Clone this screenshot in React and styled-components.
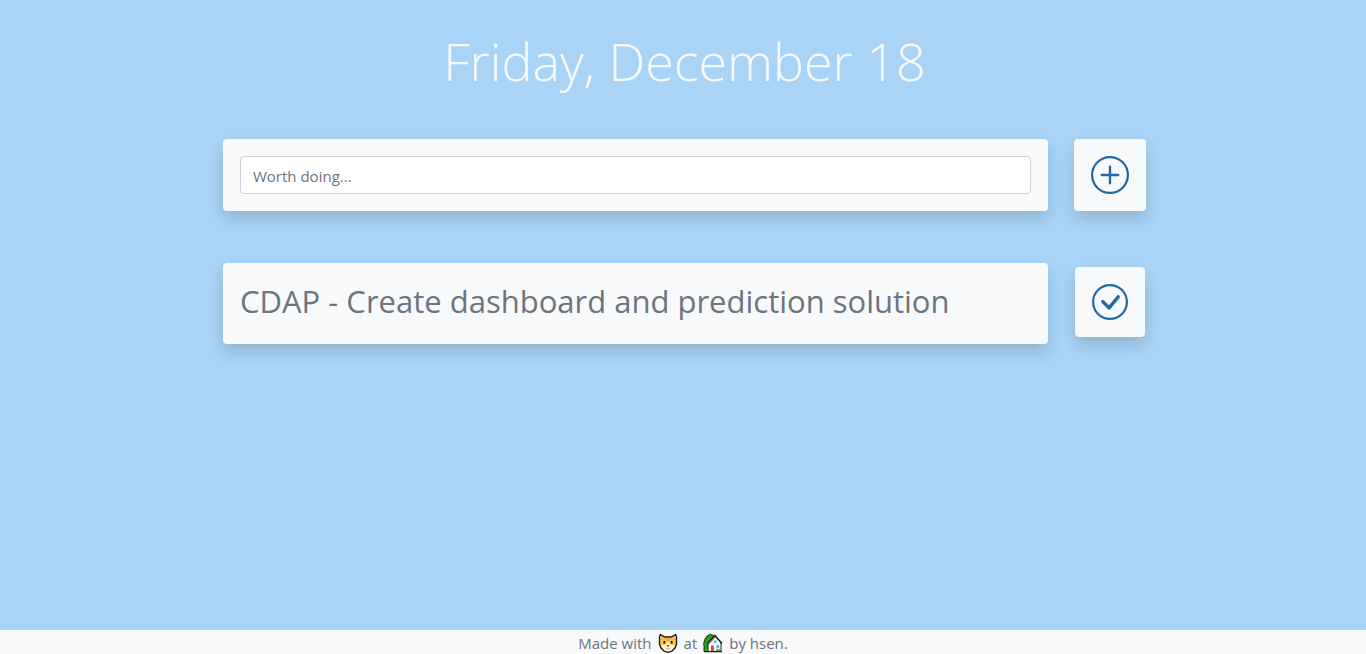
import React, { useState } from 'react';
import styled, { createGlobalStyle } from 'styled-components';

const GlobalStyle = createGlobalStyle`
  *, *::before, *::after { box-sizing: border-box; }
  body {
    margin: 0;
    background: #a9d4f6;
    color: #6c757d;
    font-family: "Segoe UI", "Open Sans", "Noto Sans", sans-serif;
    font-size: 15px;
    line-height: 24px;
  }
`;

const Page = styled.div`
  display: flex;
  flex-direction: column;
  min-height: 100vh;
`;

const Main = styled.main`
  flex: 1;
  width: 100%;
  max-width: 926px;
  margin: 0 auto;
  padding: 27px 0 48px 3px;
`;

const Heading = styled.h1`
  margin: 0 0 45px;
  color: #f8f9fa;
  font-family: "Segoe UI", "Open Sans", "Noto Sans", sans-serif;
  font-size: 52px;
  font-weight: 300;
  line-height: 67px;
  text-align: center;
`;

const Row = styled.div`
  display: grid;
  grid-template-columns: minmax(0, 1fr) 72px;
  column-gap: 26px;
  align-items: center;
`;

const EntryForm = styled(Row)`
  margin-bottom: 52px;
`;

const Card = styled.div`
  padding: ${(p) => p.$pad || '17px'};
  background: #f8f9fa;
  border-radius: 4px;
  box-shadow: 0 8px 16px rgba(0, 0, 0, 0.15);
`;

const TextInput = styled.input`
  display: block;
  width: 100%;
  height: 38px;
  padding: 8px 12px 6px;
  border: 1px solid #ced4da;
  border-radius: 4px;
  background: #fff;
  color: #495057;
  font: inherit;
  &::placeholder { color: #6c757d; opacity: 1; }
`;

const TaskTitle = styled.h2`
  margin: 0;
  font-size: 31px;
  font-weight: 400;
  line-height: 38px;
`;

const IconButton = styled.button`
  display: flex;
  align-items: center;
  justify-content: center;
  justify-self: center;
  width: ${(p) => p.$size}px;
  height: ${(p) => p.$size}px;
  margin: 0 0 ${(p) => p.$lift || 0}px;
  padding: 0;
  border: 0;
  border-radius: 4px;
  background: #f8f9fa;
  color: #2268a6;
  box-shadow: 0 8px 16px rgba(0, 0, 0, 0.15);
  cursor: pointer;
`;

const Footer = styled.footer`
  display: flex;
  justify-content: center;
  gap: 6px;
  height: 24px;
  padding-top: 1px;
  background: #f8f9fa;
  line-height: 24px;
`;

const Pictogram = styled.svg`
  width: 20px;
  height: 20px;
  margin-top: 2px;
`;

const PlusIcon = () => (
  <svg width="38" height="38" viewBox="0 0 38 38" fill="none" stroke="currentColor" strokeLinecap="round" aria-hidden="true">
    <circle cx="19" cy="19" r="17.9" strokeWidth="2.2" />
    <path d="M19 10.800v16.400M10.800 19h16.400" strokeWidth="2.400" />
  </svg>
);

const CheckIcon = () => (
  <svg width="36" height="36" viewBox="0 0 36 36" fill="none" stroke="currentColor" strokeLinecap="round" strokeLinejoin="round" aria-hidden="true">
    <circle cx="18" cy="18" r="16.9" strokeWidth="2.2" />
    <path d="M10.800 17.600l6.300 6.300L26.200 12.800" strokeWidth="3.400" />
  </svg>
);

const Cat = () => (
  <Pictogram viewBox="0 0 20 20" role="img" aria-label="cat">
    <path d="M2.500 1.500L6.500 4h7l4-2.500 1 2v8l-1.500 3.500-3 3-2.500 1h-3l-2.500-1-3-3-1.500-3.500v-8z" fill="#ffc44d" stroke="#111" strokeWidth="1.300" strokeLinejoin="round" />
    <path d="M3 3.500l2.500 1.500L3.500 7zM17 3.500L14.500 5l2 2z" fill="#f3a58b" />
    <path d="M9.200 4.500h1.600V8H9.200zM6.800 4.500h1.200v2H6.800zM12 4.500h1.200v2H12z" fill="#e09a35" />
    <path d="M3 12.500l4-.5 3-3 3 3 4 .500-1.500 2.500-2.500 2.500-3 1-3-1-2.500-2.500z" fill="#fff4e6" />
    <path d="M5.500 8h1.700v2.500H5.500zM12.800 8h1.700v2.500h-1.700z" fill="#111" />
    <path d="M8.200 12h3.600L10 14.200z" fill="#ef3524" />
    <path d="M8 15.500q2 1 4 0" stroke="#e8a16c" fill="none" />
  </Pictogram>
);

const House = () => (
  <Pictogram viewBox="0 0 20 20" role="img" aria-label="house with garden">
    <path d="M1 18.500v-5l-.3-3 1-4L4 3l3.500-1.700L11 2.500V18.500z" fill="#2d9b22" stroke="#123d12" />
    <path d="M5 9.500L12 3l6 6.500v9H5z" fill="#eef8ff" stroke="#222" />
    <path d="M4.500 10.500L12 2.500l7 8" fill="none" stroke="#111" strokeWidth="1.300" />
    <path d="M5.500 11l6.500-7" fill="none" stroke="#e6554c" strokeWidth="1.400" />
    <path d="M11 7.500h2.500V10H11zM13.500 12h2.700v3h-2.700z" fill="#40b8ef" />
    <path d="M8 12.500h2.800v6H8z" fill="#ec3e37" />
    <path d="M1 18.700h18" stroke="#111" />
    <path d="M2 17h4M13 17h5" stroke="#39a52b" strokeWidth="1.500" />
  </Pictogram>
);

export default function App() {
  const [draft, setDraft] = useState('');
  const [tasks, setTasks] = useState(['CDAP - Create dashboard and prediction solution']);

  const addTask = (event) => {
    event.preventDefault();
    if (!draft.trim()) return;
    setTasks([...tasks, draft.trim()]);
    setDraft('');
  };

  return (
    <Page>
      <GlobalStyle />
      <Main>
        <Heading>Friday, December 18</Heading>
        <EntryForm as="form" onSubmit={addTask}>
          <Card>
            <TextInput
              type="text"
              aria-label="New task"
              placeholder="Worth doing..."
              value={draft}
              onChange={(event) => setDraft(event.target.value)}
            />
          </Card>
          <IconButton type="submit" $size={72} aria-label="Add task"><PlusIcon /></IconButton>
        </EntryForm>
        {tasks.map((task, index) => (
          <Row key={index}>
            <Card $pad="19px 17px 24px">
              <TaskTitle>{task}</TaskTitle>
            </Card>
            <IconButton
              type="button"
              $size={70}
              $lift={4}
              aria-label="Complete task"
              onClick={() => setTasks(tasks.filter((_, i) => i !== index))}
            >
              <CheckIcon />
            </IconButton>
          </Row>
        ))}
      </Main>
      <Footer>
        <span>Made with</span>
        <Cat />
        <span>at</span>
        <House />
        <span>by hsen.</span>
      </Footer>
    </Page>
  );
}
